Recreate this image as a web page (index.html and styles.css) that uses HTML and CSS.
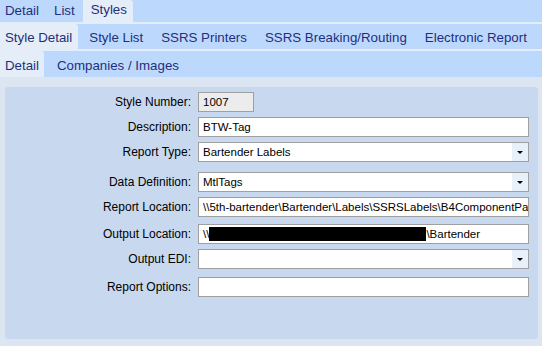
FILE: index.html
```html
<!DOCTYPE html>
<html lang="en">
  <head>
    <meta charset="UTF-8" />
    <title>Styles</title>
    <link rel="stylesheet" href="styles.css">
  </head>
  <body>
    <div class="tabs tabs-top">
      <div class="tab">Detail</div>
      <div class="tab">List</div>
      <div class="tab active">Styles</div>
    </div>
    <div class="tabs tabs-mid">
      <div class="tab active">Style Detail</div>
      <div class="tab">Style List</div>
      <div class="tab">SSRS Printers</div>
      <div class="tab">SSRS Breaking/Routing</div>
      <div class="tab">Electronic Report</div>
    </div>
    <div class="tabs tabs-low">
      <div class="tab active">Detail</div>
      <div class="tab">Companies / Images</div>
    </div>

    <div class="page">
      <div class="panel">
        <form class="form">
          <label>Style Number:</label>
          <div class="field short readonly">1007</div>

          <label>Description:</label>
          <div class="field">BTW-Tag</div>

          <label>Report Type:</label>
          <div class="field select">Bartender Labels<span class="arrow"></span></div>

          <label>Data Definition:</label>
          <div class="field select">MtlTags<span class="arrow"></span></div>

          <label>Report Location:</label>
          <div class="field">\\5th-bartender\Bartender\Labels\SSRSLabels\B4ComponentPa</div>

          <label>Output Location:</label>
          <div class="field">\\<span class="redact"></span>\Bartender</div>

          <label>Output EDI:</label>
          <div class="field select"><span class="arrow"></span></div>

          <label>Report Options:</label>
          <div class="field"></div>
        </form>
      </div>
    </div>
  </body>
</html>
```

FILE: styles.css
```css
body {
  margin: 0;
  width: 542px;
  height: 346px;
  overflow: hidden;
  font-family: "Liberation Sans", Arial, sans-serif;
  background: #dce6f3;
}

.tabs {
  display: flex;
  background: #bdd8fd;
  color: #1f2f7c;
  font-size: 13.3px;
}

.tabs-top {
  height: 22px;
  border-bottom: 2px solid #e4edf8;
}

.tabs-mid {
  height: 25px;
  border-bottom: 2px solid #e4edf8;
}

.tabs-low {
  height: 26px;
}

.tab {
  display: flex;
  align-items: center;
  white-space: nowrap;
}

.tab.active {
  background: #e4edf8;
  border-top-right-radius: 3px;
}

/* top row */
.tabs-top .tab {
  padding: 0 8px 2px 8px;
}

.tabs-top .tab:first-child {
  padding-left: 5px;
  padding-right: 7px;
}

.tabs-top .tab.active {
  padding: 0 6px 3px 8px;
}

/* middle row */
.tabs-mid .tab {
  padding: 2px 9px 0;
}

.tabs-mid .tab.active {
  padding: 2px 6px 0 5px;
}

.tabs-mid .tab.active + .tab {
  margin-left: 2px;
}

/* lower row */
.tabs-low .tab {
  padding: 2px 12px 0 13px;
}

.tabs-low .tab.active {
  padding: 2px 5px 0 5px;
}

.page {
  padding: 10px 4px 7px 5px;
}

.panel {
  height: 252px;
  background: #c8d9ef;
  border-radius: 3px;
  box-sizing: border-box;
  padding: 5px 9px 0 0;
}

.form {
  display: grid;
  grid-template-columns: 186px 1fr;
  grid-template-rows: 25px 25px 30px 25px 27px 25px 28px 20px;
  column-gap: 7px;
  align-items: start;
  font-size: 12px;
}

.form label {
  text-align: right;
  color: #000;
  line-height: 20px;
}

.field {
  position: relative;
  height: 20px;
  box-sizing: border-box;
  border: 1px solid #a0a0a0;
  background: #fff;
  padding: 0 4px;
  font-size: 11.5px;
  line-height: 18px;
  white-space: nowrap;
  overflow: hidden;
}

.field.short {
  width: 56px;
}

.field.readonly {
  background: #ececec;
}

.arrow {
  position: absolute;
  top: 0;
  right: 0;
  width: 16px;
  height: 18px;
  background: #e8f0fa;
}

.arrow::after {
  content: "";
  position: absolute;
  left: 5px;
  top: 8px;
  border-left: 3px solid transparent;
  border-right: 3px solid transparent;
  border-top: 3px solid #000;
}

.redact {
  display: inline-block;
  width: 217px;
  height: 14px;
  background: #000;
  vertical-align: -3px;
}
```
